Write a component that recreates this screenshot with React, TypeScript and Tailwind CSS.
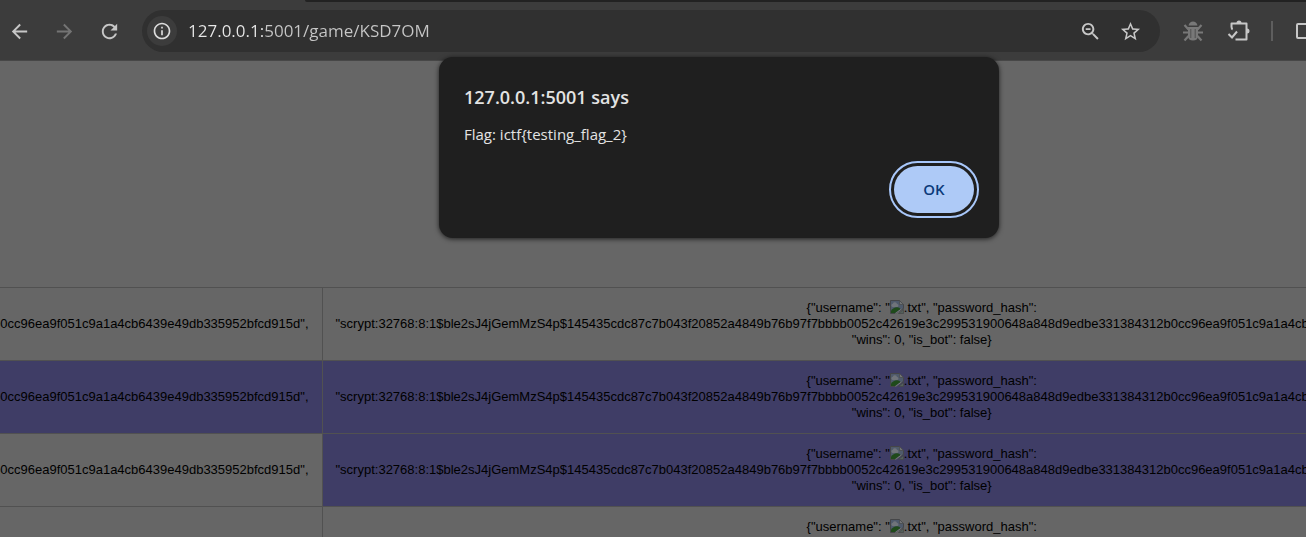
import type { ReactNode } from "react";

const HASH_HEAD =
  '"scrypt:32768:8:1$ble2sJ4jGemMzS4p$145435cdc87c7b043f20852a4849b76b97f7bbbb0052c42619e3c299531900648a848d9edbe331384312b0';
const HASH_TAIL = 'cc96ea9f051c9a1a4cb6439e49db335952bfcd915d",';

type Row = { left: boolean; right: boolean };

const ROWS: Row[] = [
  { left: false, right: false },
  { left: true, right: true },
  { left: false, right: true },
  { left: false, right: false },
];

function Icon({ children, className }: { children: ReactNode; className: string }) {
  return (
    <svg viewBox="0 0 24 24" fill="currentColor" aria-hidden="true" className={`block shrink-0 ${className}`}>
      {children}
    </svg>
  );
}

function BrokenImage() {
  return (
    <svg viewBox="0 0 14 14" role="img" aria-label="broken image" className="inline-block h-[14px] w-[14px] align-top">
      <path d="M.5.5h9l4 4v4l-8 5h-5z" fill="#4f5a6b" stroke="#454648" />
      <path d="M2.500 7a1.700 1.700 0 0 1 .3-3.300 2.200 2.200 0 0 1 4.200.4A1.500 1.500 0 0 1 7.500 7z" fill="#70747a" />
      <path d="M1 13v-2.500C2.500 8.300 5 7 7.200 7.200c1.800.2 2.800.8 3.300 1.800L5 13z" fill="#1f4a1a" />
      <path d="M9.500.5v4h4z" fill="#717375" stroke="#48494b" strokeWidth=".7" />
      <path d="M11.500 9 5.500 13.500" stroke="#757779" strokeWidth="1" />
      <path d="M13.500 9.500v4H8.500z" fill="#53605a" stroke="#454648" strokeWidth=".7" />
    </svg>
  );
}

function UserRecord({ align }: { align: "left" | "right" }) {
  return (
    <>
      <span className="block">
        {'{"username": "'}
        <BrokenImage />
        {'.txt", "password_hash":'}
      </span>
      <span className={align === "left" ? "block text-left" : "block text-right"}>
        {HASH_HEAD + HASH_TAIL}
      </span>
      <span className="block">{'"wins": 0, "is_bot": false}'}</span>
    </>
  );
}

function Toolbar() {
  return (
    <header className="border-b border-b-[#474747] bg-[#3c3c3c] text-[#c7c7c7]">
      <div className="ml-[305px] h-[2px] rounded-bl-full bg-[#222222]" />
      <div className="flex items-center py-2">
        <nav className="flex shrink-0 items-center gap-[22px] pl-2" aria-label="Navigation">
          <button type="button" aria-label="Back">
            <Icon className="h-[23px] w-[23px]">
              <path d="M20 11H7.830l5.590-5.590L12 4l-8 8 8 8 1.410-1.410L7.830 13H20v-2z" />
            </Icon>
          </button>
          <button type="button" aria-label="Forward" className="text-[#747474]">
            <Icon className="h-[23px] w-[23px]">
              <path d="M4 11h12.170l-5.590-5.590L12 4l8 8-8 8-1.410-1.410L16.170 13H4v-2z" />
            </Icon>
          </button>
          <button type="button" aria-label="Reload">
            <Icon className="h-[23px] w-[23px]">
              <path d="M17.650 6.350C16.200 4.900 14.210 4 12 4c-4.420 0-7.990 3.580-7.990 8s3.570 8 7.990 8c3.730 0 6.840-2.550 7.730-6h-2.080c-.82 2.330-3.040 4-5.650 4-3.310 0-6-2.690-6-6s2.690-6 6-6c1.660 0 3.140.69 4.220 1.780L13 11h7V4l-2.350 2.350z" />
            </Icon>
          </button>
        </nav>
        <div className="ml-[21px] flex h-[42px] min-w-0 flex-1 items-center rounded-full bg-[#303030] pr-[18px] pl-[5px]">
          <button type="button" aria-label="Site information" className="flex h-[30px] w-[30px] shrink-0 items-center justify-center rounded-full bg-[#3c3c3c] text-[#dcdcdc]">
            <Icon className="h-[20px] w-[20px]">
              <path d="M11 7h2v2h-2zm0 4h2v6h-2zm1-9C6.480 2 2 6.480 2 12s4.480 10 10 10 10-4.480 10-10S17.520 2 12 2zm0 18c-4.410 0-8-3.590-8-8s3.590-8 8-8 8 3.590 8 8-3.590 8-8 8z" />
            </Icon>
          </button>
          <input
            type="text"
            aria-label="Address"
            defaultValue="127.0.0.1:5001/game/KSD7OM"
            className="ml-[11px] min-w-0 flex-1 bg-[linear-gradient(90deg,#e8e8e8_76px,#c7c7c7_76px)] bg-clip-text text-[17px] leading-6 text-transparent outline-none"
          />
          <button type="button" aria-label="Zoom" className="ml-4">
            <Icon className="h-[23px] w-[23px]">
              <path d="M15.500 14h-.79l-.28-.27C15.410 12.590 16 11.110 16 9.500 16 5.910 13.090 3 9.500 3S3 5.910 3 9.500 5.910 16 9.500 16c1.610 0 3.090-.59 4.230-1.570l.27.28v.79l5 4.990L20.490 19l-4.990-5zm-6 0C7.010 14 5 11.990 5 9.500S7.010 5 9.500 5 14 7.010 14 9.500 11.990 14 9.500 14zM7 8.500h5v2H7z" />
            </Icon>
          </button>
          <button type="button" aria-label="Bookmark" className="ml-[17px]">
            <Icon className="h-[23px] w-[23px]">
              <path d="M22 9.240l-7.190-.62L12 2 9.190 8.630 2 9.240l5.460 4.730L5.820 21 12 17.270 18.180 21l-1.630-7.030L22 9.240zM12 15.400l-3.760 2.270 1-4.280-3.320-2.880 4.380-.38L12 6.100l1.710 4.040 4.380.38-3.320 2.880 1 4.280L12 15.400z" />
            </Icon>
          </button>
        </div>
        <div className="flex shrink-0 items-center">
          <button type="button" aria-label="Debugger extension" className="ml-[22px] text-[#787878]">
            <svg viewBox="0 0 22 22" aria-hidden="true" className="block h-[22px] w-[22px]">
              <path d="M6.500 5.500C7 2.800 9 1.500 11 1.500s4 1.300 4.500 4z" fill="currentColor" />
              <path d="M6 7h10v9c0 3-2 4.500-5 4.500S6 19 6 16z" fill="currentColor" />
              <path d="M6.500 9.500 2.500 5M15.500 9.500l4-4.500M6.500 12.500H1M15.500 12.500H21M6.500 16l-4 4.500M15.500 16l4 4.500" fill="none" stroke="currentColor" strokeWidth="2.200" />
              <path d="M8.800 9v9M13.200 9v9" stroke="#505050" strokeWidth="1" />
            </svg>
          </button>
          <button type="button" aria-label="Extensions" className="ml-[23px]">
            <svg viewBox="0 0 24 24" aria-hidden="true" className="block h-[24px] w-[24px]">
              <path d="M4.500 10.500a2 2 0 0 0 0-2.500V4.500h15v16H8.500" fill="none" stroke="currentColor" strokeWidth="2" strokeLinejoin="round" />
              <path d="M9.500 4a2.500 2.500 0 0 1 5 0zM20 9.500a2.500 2.500 0 0 1 0 5z" fill="currentColor" />
              <path d="m1.500 15 3.500 3.500 5-6" fill="none" stroke="currentColor" strokeWidth="2" />
            </svg>
          </button>
          <span className="ml-[20px] h-5 w-[2px] bg-[#5e5e5e]" />
          <button type="button" aria-label="Side panel" className="ml-[22px] w-[11px] overflow-hidden">
            <svg viewBox="0 0 11 18" aria-hidden="true" className="block h-[18px] w-[11px]">
              <path d="M12 2H3a1 1 0 0 0-1 1v12a1 1 0 0 0 1 1h9" fill="none" stroke="currentColor" strokeWidth="2" />
            </svg>
          </button>
        </div>
      </div>
    </header>
  );
}

function AlertDialog() {
  return (
    <div
      role="alertdialog"
      aria-labelledby="alert-title"
      aria-describedby="alert-text"
      className="absolute top-[57px] left-[439px] w-[560px] rounded-[14px] bg-[#1f1f1f] px-[25px] pt-7 pb-[25px] text-[#e3e3e3] shadow-[0_1px_5px_rgba(0,0,0,0.7)]"
    >
      <h1 id="alert-title" className="text-[18px] leading-6 font-semibold">
        127.0.0.1:5001 says
      </h1>
      <p id="alert-text" className="mt-[13px] text-[15px] leading-6">
        Flag: ictf{"{"}testing_flag_2{"}"}
      </p>
      <div className="mt-5 flex justify-end">
        <button
          type="button"
          className="h-[47px] w-20 rounded-full bg-[#aecaf7] text-[15px] font-semibold text-[#0b3a7a] outline-2 outline-offset-3 outline-[#a8c7fa]"
        >
          OK
        </button>
      </div>
    </div>
  );
}

export default function App() {
  return (
    <div className="relative h-screen overflow-hidden bg-[#666666] font-['Open_Sans','Noto_Sans',sans-serif]">
      <Toolbar />
      <main className="flex overflow-hidden pt-[226px] font-['Liberation_Sans',Arial,sans-serif] text-[13px] leading-4 whitespace-nowrap text-black">
        <table className="-ml-[878px] w-[2400px] shrink-0 table-fixed border-collapse text-center">
          <tbody>
            {ROWS.map((row, i) => (
              <tr key={i}>
                <td className={`border border-[#515151] px-[13px] py-3 ${row.left ? "bg-[#3f3d66]" : ""}`}>
                  <UserRecord align="right" />
                </td>
                <td className={`border border-[#515151] px-[13px] py-3 ${row.right ? "bg-[#3f3d66]" : ""}`}>
                  <UserRecord align="left" />
                </td>
              </tr>
            ))}
          </tbody>
        </table>
      </main>
      <AlertDialog />
    </div>
  );
}
